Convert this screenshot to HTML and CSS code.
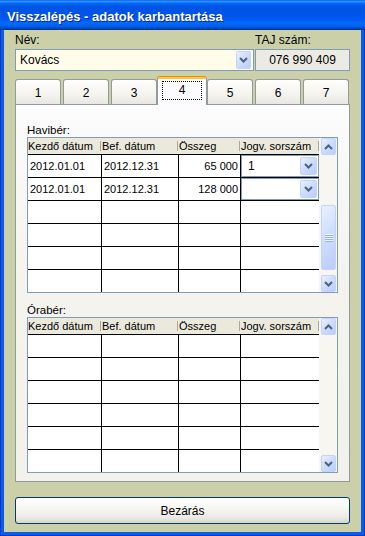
FILE: index.html
```html
<!DOCTYPE html>
<html>
    <head>
        <meta charset="utf-8">
        <link rel="stylesheet" href="styles.css">
    </head>
    <body>
        <div class='window'>
            <div class='titlebar'>Visszalépés - adatok karbantartása</div>
            <div class='client'>
                <div class='top-fields'>
                    <div class='name-field'>
                        <div class='label'>Név:</div>
                        <div class='combo name-combo'>
                            <span class='combo-text'>Kovács</span>
                            <span class='xpbtn dd-btn'><svg width='9' height='6' viewBox='0 0 9 6'><path d='M1 1l3.5 3.5L8 1' fill='none' stroke='#4d6185' stroke-width='2'/></svg></span>
                        </div>
                    </div>
                    <div class='taj-field'>
                        <div class='label'>TAJ szám:</div>
                        <div class='taj-box'>076 990 409</div>
                    </div>
                </div>

                <div class='tabs'>
                    <div class='tab'>1</div>
                    <div class='tab'>2</div>
                    <div class='tab'>3</div>
                    <div class='tab selected'><span class='focus'>4</span></div>
                    <div class='tab'>5</div>
                    <div class='tab'>6</div>
                    <div class='tab'>7</div>
                </div>

                <div class='panel'>
                    <div class='grid-label'>Havibér:</div>
                    <div class='grid-box'>
                        <div class='grid'>
                            <div class='grid-head'>
                                <div class='head-cell'>Kezdő dátum</div>
                                <div class='head-cell'>Bef. dátum</div>
                                <div class='head-cell'>Összeg</div>
                                <div class='head-cell'>Jogv. sorszám</div>
                            </div>
                            <div class='grid-row'>
                                <div class='cell'>2012.01.01</div>
                                <div class='cell'>2012.12.31</div>
                                <div class='cell num'>65 000</div>
                                <div class='cell combo-cell'>
                                    <div class='combo cell-combo'>
                                        <span class='combo-text'>1</span>
                                        <span class='xpbtn cell-dd'><svg width='9' height='6' viewBox='0 0 9 6'><path d='M1 1l3.5 3.5L8 1' fill='none' stroke='#4d6185' stroke-width='2'/></svg></span>
                                    </div>
                                </div>
                            </div>
                            <div class='grid-row'>
                                <div class='cell'>2012.01.01</div>
                                <div class='cell'>2012.12.31</div>
                                <div class='cell num'>128 000</div>
                                <div class='cell combo-cell'>
                                    <div class='combo cell-combo'>
                                        <span class='combo-text'></span>
                                        <span class='xpbtn cell-dd'><svg width='9' height='6' viewBox='0 0 9 6'><path d='M1 1l3.5 3.5L8 1' fill='none' stroke='#4d6185' stroke-width='2'/></svg></span>
                                    </div>
                                </div>
                            </div>
                            <div class='grid-row'><div class='cell'></div><div class='cell'></div><div class='cell'></div><div class='cell'></div></div>
                            <div class='grid-row'><div class='cell'></div><div class='cell'></div><div class='cell'></div><div class='cell'></div></div>
                            <div class='grid-row'><div class='cell'></div><div class='cell'></div><div class='cell'></div><div class='cell'></div></div>
                            <div class='grid-row'><div class='cell'></div><div class='cell'></div><div class='cell'></div><div class='cell'></div></div>
                        </div>
                        <div class='vscroll'>
                            <span class='xpbtn sb-btn'><svg width='9' height='6' viewBox='0 0 9 6'><path d='M1 5l3.5-3.5L8 5' fill='none' stroke='#4d6185' stroke-width='2'/></svg></span>
                            <span class='xpbtn sb-thumb'><span class='grip'></span></span>
                            <span class='xpbtn sb-btn sb-down'><svg width='9' height='6' viewBox='0 0 9 6'><path d='M1 1l3.5 3.5L8 1' fill='none' stroke='#4d6185' stroke-width='2'/></svg></span>
                        </div>
                    </div>

                    <div class='grid-label second'>Órabér:</div>
                    <div class='grid-box'>
                        <div class='grid'>
                            <div class='grid-head'>
                                <div class='head-cell'>Kezdő dátum</div>
                                <div class='head-cell'>Bef. dátum</div>
                                <div class='head-cell'>Összeg</div>
                                <div class='head-cell'>Jogv. sorszám</div>
                            </div>
                            <div class='grid-row'><div class='cell'></div><div class='cell'></div><div class='cell'></div><div class='cell'></div></div>
                            <div class='grid-row'><div class='cell'></div><div class='cell'></div><div class='cell'></div><div class='cell'></div></div>
                            <div class='grid-row'><div class='cell'></div><div class='cell'></div><div class='cell'></div><div class='cell'></div></div>
                            <div class='grid-row'><div class='cell'></div><div class='cell'></div><div class='cell'></div><div class='cell'></div></div>
                            <div class='grid-row'><div class='cell'></div><div class='cell'></div><div class='cell'></div><div class='cell'></div></div>
                            <div class='grid-row'><div class='cell'></div><div class='cell'></div><div class='cell'></div><div class='cell'></div></div>
                        </div>
                        <div class='vscroll'>
                            <span class='xpbtn sb-btn'><svg width='9' height='6' viewBox='0 0 9 6'><path d='M1 5l3.5-3.5L8 5' fill='none' stroke='#4d6185' stroke-width='2'/></svg></span>
                            <span class='xpbtn sb-btn sb-down'><svg width='9' height='6' viewBox='0 0 9 6'><path d='M1 1l3.5 3.5L8 1' fill='none' stroke='#4d6185' stroke-width='2'/></svg></span>
                        </div>
                    </div>
                </div>

                <button class='close-btn'>Bezárás</button>
            </div>
        </div>
    </body>
</html>
```

FILE: styles.css
```css
html {
    box-sizing: border-box;
}
*, *:before, *:after {
    box-sizing: inherit;
}

body {
    margin: 0;
    font-family: "Liberation Sans", Arial, sans-serif;
    font-size: 12px;
    color: #000;
    background-color: #fff;
}

.window {
    width: 365px;
    height: 536px;
    display: flex;
    flex-direction: column;
    background-color: #0a5be6;
    box-shadow: inset 1px 0 #0838c8, inset -1px 0 #0838c8, inset 0 -1px #0838c8;
}

.titlebar {
    flex: none;
    height: 30px;
    padding: 2px 0 0 7px;
    display: flex;
    align-items: center;
    color: #fff;
    font-weight: bold;
    font-size: 13px;
    text-shadow: 1px 1px 0 #0a2a8e;
    background: linear-gradient(#0058ee 0%, #3593ff 4%, #288eff 6%, #127dff 8%, #036ffc 10%, #0262ee 14%, #0057e5 20%, #0054e3 24%, #0055eb 56%, #005bf5 66%, #026afe 76%, #0062ef 86%, #0052d6 92%, #0040ab 96%, #003092 100%);
}

.client {
    flex: 1;
    margin: 0 4px 4px;
    padding: 3px 11px 8px;
    background-color: #ccd0a8;
    display: flex;
    flex-direction: column;
}

.top-fields {
    flex: none;
    display: flex;
    gap: 1px;
}

.name-field {
    flex: 1;
}

.taj-field {
    width: 95px;
}

.label {
    height: 15px;
    line-height: 15px;
    margin-bottom: 1px;
}

.combo {
    display: flex;
    align-items: center;
    border: 1px solid #7f9db9;
}

.combo-text {
    flex: 1;
    white-space: nowrap;
}

.name-combo {
    height: 22px;
    padding-left: 4px;
    background-color: #fffde9;
}

.taj-box {
    height: 22px;
    line-height: 20px;
    text-align: center;
    border: 1px solid #7f9db9;
    background-color: #ecebe3;
}

/* xp style blue button (scroll arrows, dropdowns) */
.xpbtn {
    display: flex;
    align-items: center;
    justify-content: center;
    border: 1px solid #c3d3fd;
    border-radius: 2px;
    background: linear-gradient(135deg, #eaf1fe 0%, #cfdefd 45%, #b9cdf8 100%);
}

.dd-btn {
    width: 15px;
    height: 18px;
    margin-right: 2px;
}

.tabs {
    flex: none;
    height: 28px;
    margin-top: 5px;
    display: flex;
    align-items: flex-end;
    gap: 2px;
}

.tab {
    width: 46px;
    height: 25px;
    padding-top: 6px;
    line-height: 14px;
    text-align: center;
    border: 1px solid #919b9c;
    border-bottom: none;
    border-radius: 3px 3px 0 0;
    background: linear-gradient(#fefefe, #f4f3ee 60%, #e8e7e0);
}

.tab.selected {
    width: 50px;
    height: 29px;
    margin: 0 -2px -1px;
    padding: 5px 4px 0;
    border-top: none;
    z-index: 1;
    background: linear-gradient(#e68b2c 0, #e68b2c 1px, #ffc73c 1px, #ffc73c 3px, #fcfcfe 3px);
}

.focus {
    display: block;
    height: 19px;
    line-height: 17px;
    border: 1px dotted #000;
}

.panel {
    flex: none;
    height: 378px;
    padding: 18px 11px 8px;
    border: 1px solid #919b9c;
    background: linear-gradient(#fcfcfe, #f4f3ee 45%, #f2f1eb);
}

.grid-label {
    height: 14px;
    line-height: 14px;
    font-size: 11.5px;
}

.grid-label.second {
    margin-top: 10px;
}

.grid-box {
    height: 156px;
    display: flex;
    border: 1px solid #7f9db9;
    background-color: #fff;
}

.grid {
    width: 292px;
    overflow: hidden;
}

.grid-head, .grid-row {
    display: grid;
    grid-template-columns: 74px 77px 62px 79px;
}

.grid-head {
    height: 17px;
    background-color: #ebe9dc;
    border-bottom: 1px solid #000;
}

.head-cell {
    font-size: 11px;
    line-height: 16px;
    white-space: nowrap;
    overflow: hidden;
    background: linear-gradient(#aca899, #aca899) no-repeat right 1px top 3px / 1px 10px;
}

.grid-row {
    height: 23px;
}

.cell {
    padding: 0 2px;
    font-size: 11px;
    line-height: 22px;
    white-space: nowrap;
    overflow: hidden;
    border-right: 1px solid #000;
    border-bottom: 1px solid #000;
}

.cell.num {
    text-align: right;
}

.cell.combo-cell {
    padding: 0;
}

.cell-combo {
    height: 22px;
    padding-left: 6px;
    background-color: #fff;
    font-size: 12px;
}

.cell-dd {
    width: 17px;
    height: 18px;
    margin-right: 1px;
}

.vscroll {
    width: 18px;
    padding: 0 1px 0 2px;
    display: flex;
    flex-direction: column;
    background-color: #f7f6f1;
}

.sb-btn {
    flex: none;
    height: 17px;
}

.sb-thumb {
    flex: none;
    height: 65px;
    margin-top: 50px;
}

.sb-down {
    margin-top: auto;
}

.grip {
    width: 8px;
    height: 8px;
    background: repeating-linear-gradient(#f0f5ff 0, #f0f5ff 1px, #8fb1f6 1px, #8fb1f6 2px);
}

.close-btn {
    flex: none;
    height: 27px;
    width: 100%;
    margin-top: 15px;
    padding: 0;
    border: 1px solid #003c74;
    border-radius: 3px;
    font-family: "Liberation Sans", Arial, sans-serif;
    font-size: 12px;
    color: #000;
    background: linear-gradient(#ffffff, #f5f5f1 45%, #ebe9e2 80%, #d8d3c8);
}
```
